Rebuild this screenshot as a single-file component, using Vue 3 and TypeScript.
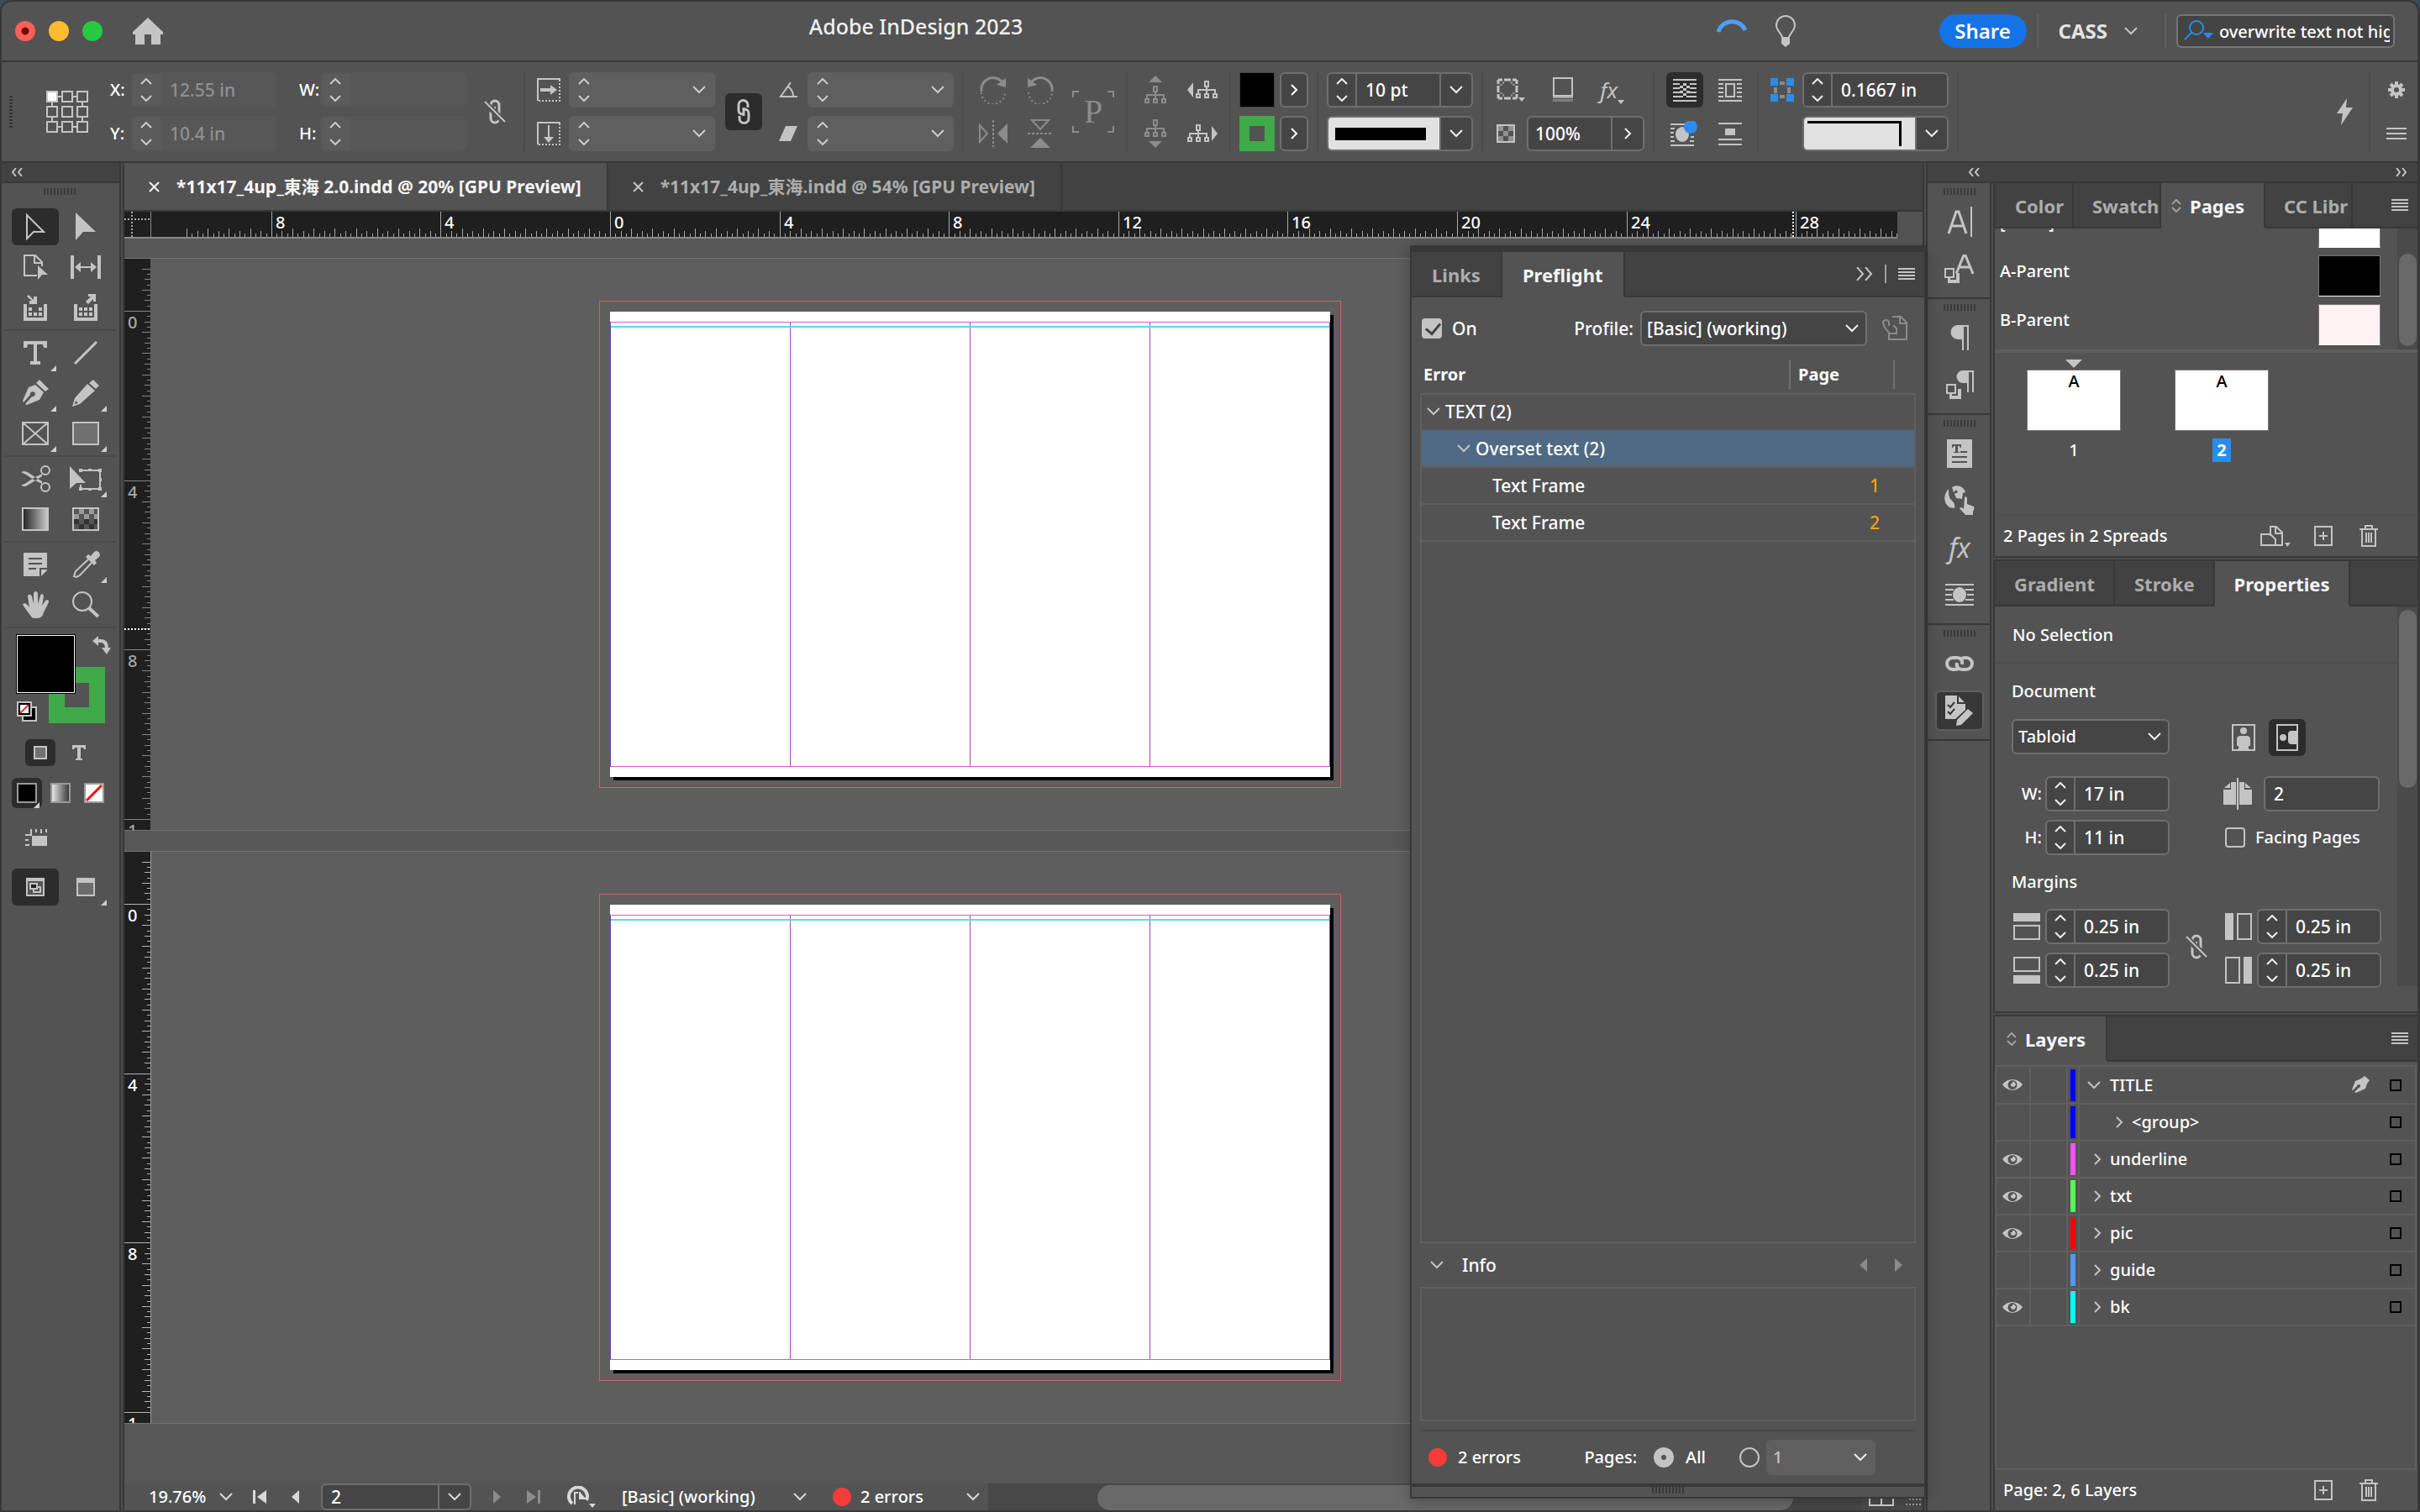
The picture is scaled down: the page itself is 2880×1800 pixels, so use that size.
<script setup lang="ts">
import { h, ref } from 'vue'

interface Glyph { w: number; h: number; d: string }

const S = 'fill="none" stroke="currentColor"'

const glyphs: Record<string, Glyph> = {
  home: { w: 36, h: 32, d: '<path d="M18 0 36 17v3h-3v12H22V20h-8v12H3V20H0v-3z"/>' },
  bulb: { w: 26, h: 38, d: `<path d="M9 27c0-5-7-8-7-15a11 11 0 0 1 22 0c0 7-7 10-7 15z" ${S} stroke-width="2"/><path d="M8 27h10v7l-5 4-5-4z"/>` },
  arc: { w: 38, h: 18, d: `<path d="M3 16a17 17 0 0 1 32-2" ${S} stroke-width="5"/>` },
  search: { w: 36, h: 26, d: `<circle cx="15" cy="9" r="8" ${S} stroke-width="2"/><path d="M9 15 1 23" ${S} stroke-width="2"/><path d="M23 15h12l-6 7z"/>` },
  down: { w: 16, h: 10, d: `<path d="m1 1 7 7 7-7" ${S} stroke-width="2"/>` },
  up: { w: 14, h: 8, d: `<path d="m1 7 6-6 6 6" ${S} stroke-width="2"/>` },
  dn: { w: 14, h: 8, d: `<path d="m1 1 6 6 6-6" ${S} stroke-width="2"/>` },
  right: { w: 9, h: 14, d: `<path d="m1 1 6 6-6 6" ${S} stroke-width="2"/>` },
  close: { w: 13, h: 13, d: `<path d="m1 1 11 11M12 1 1 12" ${S} stroke-width="2"/>` },
  ll: { w: 14, h: 10, d: `<path d="M6 0 2 5l4 5M13 0 9 5l4 5" ${S} stroke-width="2"/>` },
  rr: { w: 14, h: 10, d: `<path d="m1 0 4 5-4 5M8 0l4 5-4 5" ${S} stroke-width="2"/>` },
  rrBig: { w: 20, h: 16, d: `<path d="m1 0 7 8-7 8M11 0l7 8-7 8" ${S} stroke-width="2"/>` },
  menu: { w: 20, h: 15, d: '<path d="M0 0h20v2H0zM0 4h20v2H0zM0 8h20v2H0zM0 12h20v2H0z"/>' },
  menu3: { w: 24, h: 15, d: '<path d="M0 0h24v2H0zM0 6h24v2H0zM0 12h24v2H0z"/>' },
  updown: { w: 12, h: 16, d: `<path d="m1 6 5-5 5 5M1 10l5 5 5-5" ${S} stroke-width="2"/>` },
  grip: { w: 38, h: 8, d: '<path d="M0 0h2v8H0zM4 0h2v8H4zM8 0h2v8H8zM12 0h2v8h-2zM16 0h2v8h-2zM20 0h2v8h-2zM24 0h2v8h-2zM28 0h2v8h-2zM32 0h2v8h-2zM36 0h2v8h-2z"/>' },
  gripV: { w: 4, h: 38, d: '<path d="M0 0h4v2H0zM0 4h4v2H0zM0 8h4v2H0zM0 12h4v2H0zM0 16h4v2H0zM0 20h4v2H0zM0 24h4v2H0zM0 28h4v2H0zM0 32h4v2H0zM0 36h4v2H0z"/>' },
  refgrid: { w: 50, h: 50, d: `<path d="M7 7h36v36H7z" ${S} stroke-width="2"/><g fill="#535353" stroke="currentColor" stroke-width="2"><path fill="#fff" d="M1 1h12v12H1z"/><path d="M19 1h12v12H19zM37 1h12v12H37zM1 19h12v12H1zM19 19h12v12H19zM37 19h12v12H37zM1 37h12v12H1zM19 37h12v12H19zM37 37h12v12H37z"/></g>` },
  unlink: { w: 28, h: 30, d: `<rect x="9" y="2" width="10" height="26" rx="5" ${S} stroke-width="3"/><path d="M14 9v12" ${S} stroke-width="2"/><path d="M1 3l25 25" fill="none" stroke="#535353" stroke-width="7"/><path d="M2 3l24 24" ${S} stroke-width="2"/>` },
  chain: { w: 16, h: 30, d: `<path d="M7 18c-3 0-5-2-5-5V7a5 5 0 0 1 11 0v3M9 12c3 0 5 2 5 5v6a5 5 0 0 1-11 0v-3M8 10v10" ${S} stroke-width="3"/>` },
  scaleX: { w: 28, h: 28, d: `<path d="M28 1H1v26" ${S} stroke-width="2"/><path d="M27 2v25H2" ${S} stroke-width="2" stroke-dasharray="2 2"/><path d="M4 12h12V8l8 6-8 6v-4H4z"/>` },
  scaleY: { w: 28, h: 28, d: `<path d="M28 1H1v26" ${S} stroke-width="2"/><path d="M27 2v25H2" ${S} stroke-width="2" stroke-dasharray="2 2"/><path d="M13 4v14H8l6 7 6-7h-5V4z"/>` },
  angle: { w: 22, h: 20, d: `<path d="M14 1 2 18h20M11 6c4 3 6 7 6 12" ${S} stroke-width="2"/>` },
  skew: { w: 22, h: 18, d: '<path d="M8 0h14l-8 18H0z"/>' },
  rotR: { w: 34, h: 34, d: `<path d="M3 19a14 14 0 0 1 24-12" ${S} stroke-width="3"/><path d="M32 3v11l-11-3z"/><path d="M3 20a14 14 0 0 0 28 0" ${S} stroke-width="2" stroke-dasharray="2 3"/>` },
  rotL: { w: 34, h: 34, d: `<path d="M31 19A14 14 0 0 0 7 7" ${S} stroke-width="3"/><path d="M2 3v11l11-3z"/><path d="M3 20a14 14 0 0 0 28 0" ${S} stroke-width="2" stroke-dasharray="2 3"/>` },
  flipH: { w: 34, h: 32, d: `<path d="M1 6v20l9-10z" ${S} stroke-width="2"/><path d="M34 4v24L22 16z"/><path d="M17 0v32" ${S} stroke-width="2" stroke-dasharray="3 2"/>` },
  flipV: { w: 34, h: 34, d: `<path d="M7 1h20L17 12z" ${S} stroke-width="2"/><path d="M5 34h24L17 22z"/><path d="M2 17h30" ${S} stroke-width="2" stroke-dasharray="3 2"/>` },
  brackets: { w: 50, h: 50, d: `<path d="M8 1H1v7M42 1h7v7M8 49H1v-7M42 49h7v-7" ${S} stroke-width="2"/>` },
  treeUp: { w: 34, h: 34, d: '<path d="M9 8h16l-8-8z"/><g fill="none" stroke="currentColor" stroke-width="2"><path d="M15 13h4v6h-4zM17 19v8M7 27v-4h20v4M5 28h4v4H5zM15 28h4v4h-4zM25 28h4v4h-4z"/></g>' },
  treeDown: { w: 34, h: 34, d: '<path d="M9 26h16l-8 8z"/><g fill="none" stroke="currentColor" stroke-width="2"><path d="M15 1h4v6h-4zM17 7v8M7 15v-4h20v4M5 16h4v4H5zM15 16h4v4h-4zM25 16h4v4h-4z"/></g>' },
  treeLeft: { w: 36, h: 22, d: '<path d="M7 2v18L0 11z"/><g fill="none" stroke="currentColor" stroke-width="2"><path d="M21 1h4v6h-4zM23 7v8M13 15v-4h20v4M11 16h4v4h-4zM21 16h4v4h-4zM31 16h4v4h-4z"/></g>' },
  treeRight: { w: 36, h: 22, d: '<path d="M29 2v18l7-9z"/><g fill="none" stroke="currentColor" stroke-width="2"><path d="M11 1h4v6h-4zM13 7v8M3 15v-4h20v4M1 16h4v4H1zM11 16h4v4h-4zM21 16h4v4h-4z"/></g>' },
  corner: { w: 34, h: 28, d: `<path d="M2 2h22v22H2z" ${S} stroke-width="3" stroke-dasharray="5 2 8 2 5 0"/><path d="M8 4v3M18 4v3M8 19v3M18 19v3M4 8h3M19 8h3M4 18h3M19 18h3" ${S} stroke-width="1"/><path d="M26 23h8l-4 5z"/>` },
  shadow: { w: 26, h: 30, d: `<path d="M1 26h24v3H1z" opacity=".4"/><path d="M2 1h22v21H2z" ${S} stroke-width="2"/><path d="M1 22h24v3H1z" opacity=".7"/>` },
  tri: { w: 8, h: 5, d: '<path d="M0 0h8L4 5z"/>' },
  opacity: { w: 22, h: 22, d: `<path d="M1 1h20v20H1z" ${S} stroke-width="2"/><path opacity=".55" d="M2 2h6v6H2zM14 2h6v6h-6zM8 8h6v6H8zM2 14h6v6H2zM14 14h6v6h-6z"/>` },
  wrapNone: { w: 28, h: 27, d: '<path d="M0 0h28v2H0zM0 5h8v2H0zM20 5h8v2h-8zM0 10h8v2H0zM20 10h8v2h-8zM0 15h8v2H0zM20 15h8v2h-8zM0 20h8v2H0zM20 20h8v2h-8zM0 25h28v2H0zM12 5h4v3h-4zM8 8h4v3H8zM16 8h4v3h-4zM12 11h4v3h-4zM8 14h4v3H8zM16 14h4v3h-4zM12 17h4v3h-4zM8 20h4v2H8zM16 20h4v2h-4z"/>' },
  wrapBox: { w: 28, h: 27, d: `<path d="M0 0h28v2H0zM0 5h6v2H0zM22 5h6v2h-6zM0 10h6v2H0zM22 10h6v2h-6zM0 15h6v2H0zM22 15h6v2h-6zM0 20h6v2H0zM22 20h6v2h-6zM0 25h28v2H0z"/><path d="M9 6h10v15H9z" ${S} stroke-width="2"/>` },
  wrapShape: { w: 34, h: 30, d: '<path d="M0 3h18v2H0zM0 8h5v2H0zM0 13h4v2H0zM0 18h4v2H0zM0 23h5v2H0zM24 18h4v2h-4zM23 23h5v2h-5zM0 28h28v2H0z"/><ellipse cx="14" cy="16" rx="8" ry="9"/><circle cx="24" cy="7" r="8" fill="#2d8ceb"/>' },
  wrapJump: { w: 28, h: 27, d: '<path d="M0 0h28v2H0zM8 7h12v8H8zM0 19h28v2H0zM0 25h28v2H0z"/>' },
  cornerOpt: { w: 28, h: 28, d: '<path fill="#2d8ceb" d="M0 0h9v9H0zM19 0h9v9h-9zM0 19h9v9H0zM19 19h9v9h-9z"/><path opacity=".5" d="M11 4h6v4h-6zM11 20h6v4h-6zM4 11h4v7H4zM20 11h4v7h-4z"/>' },
  bolt: { w: 20, h: 32, d: '<path d="M13 0 1 18h7L6 32 20 11h-8z"/>' },
  gear: { w: 20, h: 20, d: `<circle cx="10" cy="10" r="5" ${S} stroke-width="4"/><path d="M10 0v4M10 16v4M0 10h4M16 10h4M3 3l3 3M14 14l3 3M3 17l3-3M14 6l3-3" ${S} stroke-width="4"/>` },
  sel: { w: 24, h: 34, d: `<path d="M2 3v28l8-8h12z" ${S} stroke-width="2"/>` },
  dsel: { w: 24, h: 34, d: '<path d="M0 0v33l9-10h15z"/>' },
  pageTool: { w: 30, h: 32, d: `<path d="M17 26H2V2h13l8 8v5M14 2v9h9" ${S} stroke-width="2"/><path d="M18 14v17l5-6h7z"/>` },
  gap: { w: 36, h: 28, d: '<path d="M0 0h4v28H0zM32 0h4v28h-4zM5 14l7-6v5h12V8l7 6-7 6v-5H12v5z"/>' },
  collect: { w: 28, h: 32, d: '<path d="M0 12h4v16h20V12h4v20H0zM6 1l6 6V3h4v9H7V8h3L4 3zM6 16h4v4H6zM18 16h4v4h-4zM6 22h4v4H6zM12 22h4v4h-4zM18 22h4v4h-4z"/>' },
  placer: { w: 28, h: 32, d: '<path d="M0 12h4v16h20V12h4v20H0zM14 9l6-6h-3V0h9v9h-3V6l-6 6zM6 16h4v4H6zM12 16h4v4h-4zM18 16h4v4h-4zM6 22h4v4H6zM12 22h4v4h-4zM18 22h4v4h-4z"/>' },
  type: { w: 28, h: 28, d: '<path d="M0 0h28v8h-4l-1-4h-7v20h4v4H8v-4h4V4H5L4 8H0z"/>' },
  line: { w: 30, h: 30, d: `<path d="M2 28 28 2" ${S} stroke-width="3"/>` },
  pen: { w: 32, h: 32, d: '<path d="M21 0l11 11-4 3L17 4zM16 6l10 9-5 9-15 6-2-1 8-9a3 3 0 1 0-2-2l-8 9-1-2L8 9z"/>' },
  pencil: { w: 32, h: 32, d: '<path d="M25 0l7 7-4 4-8-7zM18 5l9 8L9 29l-9 3 3-10zM4 25l-1 4 4-1z" fill-rule="evenodd"/>' },
  frame: { w: 32, h: 28, d: `<path d="M1 1h30v26H1zM1 1l30 26M31 1 1 27" ${S} stroke-width="2"/>` },
  rect: { w: 32, h: 28, d: '<path d="M1 1h30v26H1z" fill="#707070" stroke="currentColor" stroke-width="2"/>' },
  scissors: { w: 35, h: 32, d: `<circle cx="29" cy="6" r="5" ${S} stroke-width="2"/><circle cx="29" cy="26" r="5" ${S} stroke-width="2"/><path d="M0 8c4-2 6-1 9 1l16 10v3L15 17 6 11zM0 24c4 2 6 1 9-1l16-10v-3L15 15l-9 6z"/>` },
  transform: { w: 38, h: 30, d: `<path d="M13 22v5h23V5H13" ${S} stroke-width="2"/><path d="M11 3h4v4h-4zM22 3h4v3h-4zM34 3h4v4h-4zM35 14h3v4h-3zM34 25h4v4h-4zM22 26h4v3h-4zM11 25h4v4h-4zM0 0v27l8-7h11z"/>` },
  gradient: { w: 32, h: 28, d: '<defs><linearGradient id="ga"><stop stop-color="#222"/><stop offset="1" stop-color="#ccc"/></linearGradient></defs><path d="M1 1h30v26H1z" fill="url(#ga)" stroke="currentColor" stroke-width="2"/>' },
  feather: { w: 32, h: 28, d: '<path d="M1 1h30v26H1z" fill="#555" stroke="currentColor" stroke-width="2"/><path fill="#999" d="M8 2h6v6H8zM20 2h6v6h-6zM2 8h6v6H2zM14 8h6v6h-6zM26 8h4v6h-4z"/><path fill="#333" d="M2 14h6v6H2zM14 14h6v6h-6zM26 14h4v6h-4zM8 20h6v6H8zM20 20h6v6h-6z"/>' },
  note: { w: 28, h: 28, d: '<path fill-rule="evenodd" d="M0 0h28v18h-9v10H0zM28 20v1l-7 7v-8zM6 6v2h16V6zM6 12v2h16v-2zM6 18v2h9v-2z"/>' },
  dropper: { w: 33, h: 33, d: `<path d="M19 10 4 24l-2 6 3 1 4-2 14-15" ${S} stroke-width="2"/><path d="M16 7l3-3 3 2 4-5c4-3 9 2 6 6l-5 4 2 3-3 3z"/>` },
  hand: { w: 31, h: 32, d: '<path d="M10 30C7 25 3 21 0 16c1-3 5-2 8 3L6 6c0-3 4-3 5 0l2 9V3c0-4 5-4 5 0v12l3-10c1-3 4-2 4 1l-2 11 4-6c2-2 5 0 4 2l-6 12c-1 4-3 7-8 7-3 0-6 0-7-2z"/>' },
  zoom: { w: 32, h: 32, d: `<circle cx="12" cy="12" r="11" ${S} stroke-width="2"/><path d="m20 20 11 10" ${S} stroke-width="4"/>` },
  swap: { w: 22, h: 22, d: `<path d="M5 6h5c5 0 7 3 7 9v2" ${S} stroke-width="4"/><path d="M7 0v12L0 6zM11 14h11l-5 8z"/>` },
  defaults: { w: 24, h: 24, d: '<path d="M6 6h18v18H6z"/><path fill="#000" d="M8 8h14v14H8z"/><path d="M12 12h6v6h-6z"/><path fill="#000" d="M13 13h4v4h-4z"/><path d="M0 0h18v18H0z"/><path fill="#000" d="M2 2h14v14H2z"/><path fill="#fff" d="M4 4h10v10H4z"/><path d="M4 14 14 4" stroke="#e33" stroke-width="2"/>' },
  container: { w: 16, h: 16, d: '<path d="M1 1h14v14H1z" fill="#707070" stroke="currentColor" stroke-width="2"/>' },
  typeS: { w: 16, h: 18, d: '<path d="M0 0h16v5h-2l-1-2h-3v13h2v2H4v-2h2V3H3L2 5H0z"/>' },
  swBlack: { w: 24, h: 24, d: '<path fill="#000" stroke="#9a9a9a" stroke-width="2" d="M1 1h22v22H1z"/>' },
  swGrad: { w: 24, h: 24, d: '<defs><linearGradient id="gb"><stop stop-color="#eee"/><stop offset="1" stop-color="#333"/></linearGradient></defs><path fill="url(#gb)" stroke="#9a9a9a" stroke-width="2" d="M1 1h22v22H1z"/>' },
  swNone: { w: 24, h: 24, d: '<path fill="#fff" stroke="#9a9a9a" stroke-width="2" d="M1 1h22v22H1z"/><path d="M3 21 21 3" stroke="#f00" stroke-width="3"/>' },
  rulers: { w: 26, h: 20, d: '<path d="M8 8h18v12H8zM6 0h2v8H0V6h6zM12 0h2v4h-2zM18 0h2v5h-2zM24 0h2v4h-2zM0 12h4v2H0zM0 18h5v2H0z"/>' },
  viewNormal: { w: 22, h: 22, d: '<path d="M0 0h22v22H0z"/><path fill="#555" d="M2 4h18v16H2z"/><path d="M8 10h10v8H8z"/><path fill="#555" d="M10 12h6v4h-6z"/><path d="M4 6h10v8H4z"/><path fill="#222" d="M6 8h6v4H6z"/>' },
  viewPreview: { w: 22, h: 22, d: '<path d="M0 0h22v22H0z"/><path fill="#6c6c6c" d="M2 6h18v14H2z"/>' },
  charPanel: { w: 30, h: 36, d: `<path d="M2 32 11 6h3l9 26M5 23h15" ${S} stroke-width="3"/><path d="M28 0h2v36h-2z"/>` },
  charStyle: { w: 36, h: 34, d: `<path d="m14 23 9-22h2l9 22M18 15h13" ${S} stroke-width="3"/><path d="M4 22h14v12H4z"/><path d="M1 17h10v10H1z" fill="#535353" stroke="currentColor" stroke-width="2"/><path d="M13 22v7H7" fill="none" stroke="#535353" stroke-width="2"/>` },
  para: { w: 22, h: 30, d: '<path d="M9 0h13v30h-2V2h-4v28h-2V17H9A8 8 0 0 1 9 0z"/>' },
  paraStyle: { w: 33, h: 34, d: '<path d="M20 0h13v26h-2V2h-4v24h-2V15h-5a7 7 0 0 1 0-15zM4 22h14v12H4z"/><path d="M1 17h10v10H1z" fill="#535353" stroke="currentColor" stroke-width="2"/><path d="M13 22v7H7" fill="none" stroke="#535353" stroke-width="2"/>' },
  article: { w: 30, h: 34, d: '<path d="M0 0h30v34H0z"/><path fill="#535353" d="M6 6h11v4h-1l-1-2h-2v7h2v1H8v-1h2V8H8l-1 2H6zM16 14h8v2h-8zM6 20h18v2H6zM6 26h18v2H6z"/>' },
  globe: { w: 36, h: 36, d: '<path d="M5 4c-7 8-6 17 1 22l6 1c1-5-1-7-4-10S5 9 5 4zM9 2c6-4 14-1 16 6l-3 1-1 7-7-1-2-5 4-2-2-3-3 3zM24 14c2-2 3 0 3 2v6l8 3c1 2 0 4-1 6v4h-9c-2-3-5-5-7-8 1-2 3-1 5 1z"/>' },
  wrapPanel: { w: 34, h: 26, d: '<path d="M0 0h34v2H0zM0 6h10v2H0zM24 6h10v2H24zM0 12h8v2H0zM26 12h8v2h-8zM0 18h10v2H0zM24 18h10v2H24zM0 24h34v2H0z"/><ellipse cx="17" cy="13" rx="8" ry="9"/>' },
  links: { w: 38, h: 18, d: `<path d="M19 14c-2 2-4 2-8 2a7 7 0 0 1 0-14h5c4 0 7 3 6 8M19 4c2-2 4-2 8-2a7 7 0 0 1 0 14h-5c-4 0-7-3-6-8" ${S} stroke-width="4"/>` },
  preflight: { w: 34, h: 36, d: '<path d="M0 0h14v10h10v7L12 28H0zM16 1l7 7h-7z"/><path d="m3 11 3 3 5-6M3 19l3 3 5-6" fill="none" stroke="#383838" stroke-width="2"/><path d="m27 16 6 5-14 14-6 1 1-7z"/>' },
  portrait: { w: 28, h: 32, d: `<path d="M1 1h26v30H1z" ${S} stroke-width="2"/><circle cx="14" cy="8" r="4"/><path d="M6 18c0-3 2-4 4-4h8c2 0 4 1 4 4v8h-2v5H8v-5H6z"/>` },
  landscape: { w: 26, h: 32, d: `<path d="M1 1h24v30H1z" ${S} stroke-width="2"/><circle cx="8" cy="16" r="4"/><path d="M25 8h-7c-3 0-4 2-4 4v8c0 2 1 4 4 4h7z"/>` },
  spread: { w: 34, h: 38, d: '<path d="M16 0h2v38h-2zM0 14h9V5h6v27H0zM34 14h-9V5h-6v27h15zM1 12l7-6v6zM33 12l-7-6v6z"/>' },
  mTop: { w: 32, h: 32, d: `<path d="M0 0h32v10H0z"/><path d="M1 15h30v16H1z" ${S} stroke-width="2"/>` },
  mBottom: { w: 32, h: 32, d: `<path d="M0 22h32v10H0z"/><path d="M1 1h30v16H1z" ${S} stroke-width="2"/>` },
  mLeft: { w: 32, h: 32, d: `<path d="M0 0h10v32H0z"/><path d="M15 1h16v30H15z" ${S} stroke-width="2"/>` },
  mRight: { w: 32, h: 32, d: `<path d="M22 0h10v32H22z"/><path d="M1 1h16v30H1z" ${S} stroke-width="2"/>` },
  eye: { w: 24, h: 13, d: '<path fill-rule="evenodd" d="M0 6C6-2 18-2 24 6c-6 9-18 9-24 0zm12-5a5 5 0 1 0 0 11 5 5 0 0 0 0-11zm0 2a3 3 0 1 1-2 2h2z"/>' },
  nib: { w: 21, h: 21, d: '<path d="M15 0l6 5-3 4-2 6-11 5-2-1 5-5a2 2 0 1 0-2-2l-5 5-1-1 4-10 7-3z"/>' },
  editSize: { w: 36, h: 25, d: `<path d="M12 12V1h7l7 7v15H15M18 1v8h8M1 10h11l6 6v7H1z" ${S} stroke-width="2"/><path d="M29 20h7l-4 5z"/>` },
  add: { w: 22, h: 24, d: `<path d="M1 1h20v22H1zM11 7v10M6 12h10" ${S} stroke-width="2"/>` },
  trash: { w: 22, h: 26, d: `<path d="M0 5h22M7 5V1h8v4M3 6v19h16V6M8 9v12M11 9v12M14 9v12" ${S} stroke-width="2"/>` },
  embed: { w: 30, h: 30, d: `<path d="M12 1h10l7 7v20H8v-8M21 1v8h8M8 12v-5a4 4 0 0 0-7 0c0 7 5 10 8 14h8v-6l-4-4" ${S} stroke-width="2"/>` },
  triL: { w: 9, h: 16, d: '<path d="M9 0v16L0 8z"/>' },
  triR: { w: 9, h: 16, d: '<path d="M0 0v16l9-8z"/>' },
  first: { w: 16, h: 16, d: '<path d="M0 0h3v16H0zM16 0v16L5 8z"/>' },
  last: { w: 16, h: 16, d: '<path d="M13 0h3v16h-3zM0 0v16l11-8z"/>' },
  statusDoc: { w: 34, h: 26, d: `<path d="M6 21A11 11 0 1 1 23 17" ${S} stroke-width="4"/><path d="M8 7h6v7h8v9H8z" fill="#535353"/><path d="M9 22V8h4M15 7v8h7" ${S} stroke-width="2"/><path d="M15 7l7 8h-7z"/><path d="M26 21h8l-4 5z"/>` },
  split: { w: 30, h: 22, d: `<path d="M1 0v20h28V0M15 0v20" ${S} stroke-width="2"/>` },
  resize: { w: 20, h: 18, d: '<path opacity=".6" d="M18 2h2v2h-2zM14 2h2v2h-2zM10 2h2v2h-2zM6 8h2v2H6zM10 8h2v2h-2zM14 8h2v2h-2zM18 8h2v2h-2zM2 14h2v2H2zM6 14h2v2H6zM10 14h2v2h-2zM14 14h2v2h-2zM18 14h2v2h-2z"/>' },
}

const Icon = (props: { n: string }) => {
  const g = glyphs[props.n]
  return h('svg', { viewBox: `0 0 ${g.w} ${g.h}`, width: g.w, height: g.h, fill: 'currentColor', 'aria-hidden': 'true', innerHTML: g.d })
}
Icon.props = ['n']

interface Tool { n: string; label: string; more?: boolean; on?: boolean }
const toolGroups: Tool[][] = [
  [
    { n: 'sel', label: 'Selection', on: true }, { n: 'dsel', label: 'Direct Selection' },
    { n: 'pageTool', label: 'Page' }, { n: 'gap', label: 'Gap' },
    { n: 'collect', label: 'Content Collector' }, { n: 'placer', label: 'Content Placer' },
  ],
  [
    { n: 'type', label: 'Type', more: true }, { n: 'line', label: 'Line' },
    { n: 'pen', label: 'Pen', more: true }, { n: 'pencil', label: 'Pencil', more: true },
    { n: 'frame', label: 'Rectangle Frame', more: true }, { n: 'rect', label: 'Rectangle', more: true },
  ],
  [
    { n: 'scissors', label: 'Scissors' }, { n: 'transform', label: 'Free Transform', more: true },
    { n: 'gradient', label: 'Gradient Swatch' }, { n: 'feather', label: 'Gradient Feather' },
  ],
  [
    { n: 'note', label: 'Note' }, { n: 'dropper', label: 'Eyedropper', more: true },
    { n: 'hand', label: 'Hand' }, { n: 'zoom', label: 'Zoom' },
  ],
]

const dockGroups: Tool[][] = [
  [{ n: 'charPanel', label: 'Character' }, { n: 'charStyle', label: 'Character Styles' }],
  [{ n: 'para', label: 'Paragraph' }, { n: 'paraStyle', label: 'Paragraph Styles' }],
  [{ n: 'article', label: 'Articles' }, { n: 'globe', label: 'Hyperlinks' }, { n: 'fx', label: 'Effects' }, { n: 'wrapPanel', label: 'Text Wrap' }],
  [{ n: 'links', label: 'Links' }, { n: 'preflight', label: 'Preflight', on: true }],
]

// Rulers: 252 px cover five inches at the current zoom.
const px = (inch: number) => Math.round(inch * 252 / 5)
interface Tick { p: number; len: number; label: string }
const ticks = (from: number, to: number, full: number): Tick[] => {
  const out: Tick[] = []
  for (let e = from * 8; e <= to * 8; e++) {
    const major = e % 32 === 0
    out.push({
      p: px(e / 8),
      len: major ? full : e % 4 === 0 ? 10 : e % 2 === 0 ? 7 : 4,
      label: major ? String(Math.abs(e / 8)) : '',
    })
  }
  return out
}
const hTicks = ticks(-10, 31, 30).map(t => ({ ...t, p: t.p + 547 }))
const vTicks = ticks(-1, 12, 31).map(t => ({ ...t, p: t.p + 62 }))
const spreads = [{ id: 1, active: false }, { id: 2, active: true }]

const position = ref([{ k: 'X:', v: '12.55 in' }, { k: 'Y:', v: '10.4 in' }])
const size = ref([{ k: 'W:', v: '' }, { k: 'H:', v: '' }])
const scale = [{ n: 'scaleX', label: 'Scale X' }, { n: 'scaleY', label: 'Scale Y' }]
const turn = [{ n: 'angle', label: 'Rotation' }, { n: 'skew', label: 'Shear' }]
const docSize = ref([{ k: 'W:', v: '17 in' }, { k: 'H:', v: '11 in' }])
const margins = ref([
  { n: 'mTop', label: 'Top margin', v: '0.25 in' }, { n: 'mLeft', label: 'Left margin', v: '0.25 in' },
  { n: 'mBottom', label: 'Bottom margin', v: '0.25 in' }, { n: 'mRight', label: 'Right margin', v: '0.25 in' },
])

const layers = [
  { name: 'TITLE', color: '#0000ff', eye: true, kind: 'open' },
  { name: '<group>', color: '#0000ff', eye: false, kind: 'child' },
  { name: 'underline', color: '#ff4fff', eye: true, kind: '' },
  { name: 'txt', color: '#4fff4f', eye: true, kind: '' },
  { name: 'pic', color: '#ff0000', eye: true, kind: '' },
  { name: 'guide', color: '#4f99ff', eye: false, kind: '' },
  { name: 'bk', color: '#00ffff', eye: true, kind: '' },
]
const parents = [
  { name: '[None]', color: '#ffffff' },
  { name: 'A-Parent', color: '#000000' },
  { name: 'B-Parent', color: '#fff2f5' },
]
const preflightOn = ref(true)
const facing = ref(false)
const range = ref('all')
const query = ref('overwrite text not highlighted')
</script>

<template>
  <div class="app">
    <header class="titlebar">
      <div class="lights"><i class="red"></i><i class="yellow"></i><i class="green"></i></div>
      <button class="home" aria-label="Home"><Icon n="home" /></button>
      <h1>Adobe InDesign 2023</h1>
      <div class="title-right">
        <Icon n="arc" class="arc" />
        <button class="bulb" aria-label="Learn"><Icon n="bulb" /></button>
        <button class="share">Share</button>
        <i class="vline"></i>
        <button class="user">CASS <Icon n="down" /></button>
        <i class="vline"></i>
        <label class="search"><Icon n="search" /><input v-model="query" type="text" aria-label="Search help"></label>
      </div>
    </header>

    <div class="controls">
      <Icon n="gripV" class="gripv" />
      <button class="refpoint" aria-label="Reference point"><Icon n="refgrid" /></button>
      <div class="stack pos">
        <div v-for="f in position" :key="f.k" class="field-row">
          <label :for="'p' + f.k">{{ f.k }}</label>
          <div class="num off"><span class="steps"><Icon n="up" /><Icon n="dn" /></span><input :id="'p' + f.k" v-model="f.v" type="text"></div>
        </div>
      </div>
      <div class="stack pos">
        <div v-for="f in size" :key="f.k" class="field-row">
          <label :for="'s' + f.k">{{ f.k }}</label>
          <div class="num off"><span class="steps"><Icon n="up" /><Icon n="dn" /></span><input :id="'s' + f.k" v-model="f.v" type="text"></div>
        </div>
      </div>
      <button class="plain unl" aria-label="Constrain size"><Icon n="unlink" /></button>
      <i class="sep"></i>
      <div class="stack s14">
        <div v-for="f in scale" :key="f.n" class="field-row">
          <span class="lead28"><Icon :n="f.n" /></span>
          <div class="num combo"><span class="steps"><Icon n="up" /><Icon n="dn" /></span><input type="text" :aria-label="f.label"><button :aria-label="f.label + ' values'"><Icon n="down" /></button></div>
        </div>
      </div>
      <button class="pressed chain" aria-label="Constrain scale"><Icon n="chain" /></button>
      <div class="stack s20">
        <div v-for="f in turn" :key="f.n" class="field-row">
          <span class="lead22"><Icon :n="f.n" /></span>
          <div class="num combo"><span class="steps"><Icon n="up" /><Icon n="dn" /></span><input type="text" :aria-label="f.label"><button :aria-label="f.label + ' values'"><Icon n="down" /></button></div>
        </div>
      </div>
      <i class="sep e10"></i>
      <div class="quad dim">
        <button aria-label="Rotate 90 clockwise"><Icon n="rotR" /></button><button aria-label="Rotate 90 counter-clockwise"><Icon n="rotL" /></button>
        <button aria-label="Flip horizontal"><Icon n="flipH" /></button><button aria-label="Flip vertical"><Icon n="flipV" /></button>
      </div>
      <div class="pmark dim"><Icon n="brackets" /><b>P</b></div>
      <i class="sep e14"></i>
      <div class="quad trees">
        <button class="dim" aria-label="Select container"><Icon n="treeUp" /></button><button aria-label="Previous object"><Icon n="treeLeft" /></button>
        <button class="dim" aria-label="Select content"><Icon n="treeDown" /></button><button aria-label="Next object"><Icon n="treeRight" /></button>
      </div>
      <i class="sep e10"></i>
      <div class="stack s10">
        <div class="field-row g6"><span class="sw fill"></span><button class="box arrow" aria-label="Fill"><Icon n="right" /></button></div>
        <div class="field-row g6"><span class="sw stroke"></span><button class="box arrow" aria-label="Stroke"><Icon n="right" /></button></div>
      </div>
      <i class="sep e10"></i>
      <div class="stack s10">
        <div class="num"><span class="steps"><Icon n="up" /><Icon n="dn" /></span><input type="text" value="10 pt" aria-label="Stroke weight"><button class="drop" aria-label="Weights"><Icon n="down" /></button></div>
        <div class="num"><span class="preview"><i class="solid"></i></span><button class="drop" aria-label="Stroke type"><Icon n="down" /></button></div>
      </div>
      <i class="sep e10"></i>
      <div class="stack fxs">
        <div class="field-row fx-row">
          <button class="plain" aria-label="Corner shape"><Icon n="corner" /></button>
          <button class="plain" aria-label="Drop shadow"><Icon n="shadow" /></button>
          <button class="plain fx" aria-label="Effects">fx<Icon n="tri" /></button>
        </div>
        <div class="field-row">
          <span class="lead36"><Icon n="opacity" /></span>
          <div class="num pct"><input type="text" value="100%" aria-label="Opacity"><button class="drop" aria-label="Opacity slider"><Icon n="right" /></button></div>
        </div>
      </div>
      <i class="sep e10"></i>
      <div class="quad wraps">
        <button class="pressed" aria-label="No text wrap"><Icon n="wrapNone" /></button><button aria-label="Wrap bounding box"><Icon n="wrapBox" /></button>
        <button aria-label="Wrap object shape"><Icon n="wrapShape" /></button><button aria-label="Jump object"><Icon n="wrapJump" /></button>
      </div>
      <i class="sep e10"></i>
      <div class="stack s14">
        <div class="field-row">
          <span class="lead28"><Icon n="cornerOpt" /></span>
          <div class="num"><span class="steps"><Icon n="up" /><Icon n="dn" /></span><input type="text" value="0.1667 in" aria-label="Corner size"></div>
        </div>
        <div class="field-row">
          <span class="lead28"></span>
          <div class="num"><span class="preview"><i class="cornerline"></i></span><button class="drop" aria-label="Corner type"><Icon n="down" /></button></div>
        </div>
      </div>
      <i class="sep e10"></i>
      <div class="controls-end">
        <button class="plain" aria-label="Quick apply"><Icon n="bolt" /></button>
        <i class="sep"></i>
        <div class="stack end-stack">
          <button class="plain" aria-label="Customize"><Icon n="gear" /></button>
          <button class="plain" aria-label="Menu"><Icon n="menu3" /></button>
        </div>
      </div>
    </div>

    <div class="workspace">
      <aside class="toolbox">
        <div class="tool-head"><Icon n="ll" /></div>
        <div class="tool-grip"><Icon n="grip" /></div>
        <div v-for="(g, i) in toolGroups" :key="i" class="tool-group">
          <button v-for="t in g" :key="t.n" :class="{ pressed: t.on }" :aria-label="t.label"><Icon :n="t.n" /><i v-if="t.more" class="more"></i></button>
        </div>
        <div class="colors">
          <span class="c-stroke"></span><span class="c-fill"></span>
          <button class="c-swap" aria-label="Swap fill and stroke"><Icon n="swap" /></button>
          <button class="c-def" aria-label="Default fill and stroke"><Icon n="defaults" /></button>
        </div>
        <div class="target">
          <button class="pressed" aria-label="Format container"><Icon n="container" /></button>
          <button aria-label="Format text"><Icon n="typeS" /></button>
        </div>
        <div class="applies">
          <button class="pressed" aria-label="Apply color"><Icon n="swBlack" /><i class="more"></i></button>
          <button aria-label="Apply gradient"><Icon n="swGrad" /></button>
          <button aria-label="Apply none"><Icon n="swNone" /></button>
        </div>
        <button class="ruler-btn" aria-label="View options"><Icon n="rulers" /></button>
        <div class="tool-group views">
          <button class="pressed" aria-label="Normal view"><Icon n="viewNormal" /></button>
          <button aria-label="Preview"><Icon n="viewPreview" /><i class="more"></i></button>
        </div>
      </aside>
      <i class="gutter"></i>

      <main class="doc">
        <nav class="doc-tabs">
          <div class="doc-tab on"><button aria-label="Close"><Icon n="close" /></button><span>*11x17_4up_東海 2.0.indd @ 20% [GPU Preview]</span></div>
          <div class="doc-tab"><button aria-label="Close"><Icon n="close" /></button><span>*11x17_4up_東海.indd @ 54% [GPU Preview]</span></div>
        </nav>
        <div class="hruler">
          <svg class="origin" width="31" height="30"><path d="M9 0v30M0 9h31" stroke="#aaa" stroke-width="2" stroke-dasharray="2 2" /></svg>
          <div class="hscale">
            <svg width="100%" height="30">
              <g v-for="t in hTicks" :key="t.p">
                <rect :x="t.p - 1" :y="30 - t.len" width="1" :height="t.len" fill="#a8a8a8" />
                <text v-if="t.label" :x="t.p + 4" y="20">{{ t.label }}</text>
              </g>
              <path d="M1954 0v30" stroke="#fff" stroke-width="2" stroke-dasharray="2 2" />
            </svg>
          </div>
        </div>
        <div class="board">
          <section v-for="s in spreads" :key="s.id" class="spread" :class="{ active: s.active }">
            <svg class="vruler" width="31" height="100%">
              <g v-for="t in vTicks" :key="t.p">
                <rect :x="31 - t.len" :y="t.p" :width="t.len" height="1" />
                <text v-if="t.label" x="4" :y="t.p + 21">{{ t.label[0] }}</text>
              </g>
              <path v-if="!s.active" d="M0 441h31" stroke="#fff" stroke-width="2" stroke-dasharray="2 2" />
            </svg>
            <div class="canvas">
              <div class="bleed"></div>
              <div class="page"><div class="frame"><i></i><i></i><i></i><i></i></div></div>
            </div>
          </section>
        </div>
        <footer class="status">
          <button class="zoomval">19.76% <Icon n="down" /></button>
          <button class="nav" aria-label="First page"><Icon n="first" /></button>
          <button class="nav" aria-label="Previous page"><Icon n="triL" /></button>
          <div class="num pageno"><input type="text" value="2" aria-label="Page"><button class="drop" aria-label="Page list"><Icon n="down" /></button></div>
          <button class="nav dim" aria-label="Next page"><Icon n="triR" /></button>
          <button class="nav dim" aria-label="Last page"><Icon n="last" /></button>
          <button class="nav sdoc" aria-label="Open status"><Icon n="statusDoc" /></button>
          <button class="profile">[Basic] (working) <Icon n="down" /></button>
          <i class="dot"></i>
          <button class="errs">2 errors <Icon n="down" /></button>
          <div class="hscroll"><i></i></div>
          <div class="corner-tools"><Icon n="split" /><Icon n="resize" /></div>
        </footer>

        <section class="preflight">
          <div class="tabs">
            <button class="tab">Links</button><button class="tab on">Preflight</button>
            <span class="tab-end"><Icon n="rrBig" /><i></i><Icon n="menu" /></span>
          </div>
          <div class="pf-body">
            <div class="pf-top">
              <label class="check"><input v-model="preflightOn" type="checkbox">On</label>
              <label for="profile" class="pf-profile">Profile:</label>
              <span class="select"><select id="profile"><option>[Basic] (working)</option></select><Icon n="down" /></span>
              <button class="plain dim" aria-label="Embed profile"><Icon n="embed" /></button>
            </div>
            <div class="pf-list">
              <table>
                <thead><tr><th>Error</th><th class="c-page">Page</th></tr></thead>
                <tbody>
                  <tr><td><span class="lv0"><Icon n="down" />TEXT (2)</span></td><td></td></tr>
                  <tr class="hit"><td><span class="lv1"><Icon n="down" />Overset text (2)</span></td><td></td></tr>
                  <tr><td><span class="lv2">Text Frame</span></td><td class="pg">1</td></tr>
                  <tr><td><span class="lv2">Text Frame</span></td><td class="pg">2</td></tr>
                </tbody>
              </table>
            </div>
            <div class="pf-info"><Icon n="down" /><span>Info</span><button class="dim" aria-label="Previous error"><Icon n="triL" /></button><button class="dim" aria-label="Next error"><Icon n="triR" /></button></div>
            <div class="pf-box"></div>
            <div class="pf-foot">
              <i class="dot"></i><span class="count">2 errors</span>
              <span class="lab">Pages:</span>
              <label class="radio"><input v-model="range" type="radio" value="all">All</label>
              <input v-model="range" type="radio" value="range" aria-label="Page range">
              <span class="select flat"><select aria-label="Range"><option>1</option></select><Icon n="down" /></span>
            </div>
          </div>
          <div class="pf-grip"><Icon n="grip" /></div>
        </section>
      </main>
      <i class="gutter"></i>

      <div class="dock">
        <div class="dock-head"><Icon n="ll" /><Icon n="rr" /></div>
        <div class="dock-body">
          <aside class="strip">
            <div v-for="(g, i) in dockGroups" :key="i" class="strip-group">
              <Icon n="grip" class="sgrip" />
              <button v-for="b in g" :key="b.label" :class="{ on: b.on }" :aria-label="b.label">
                <span v-if="b.n === 'fx'" class="fxbig">fx</span><Icon v-else :n="b.n" />
              </button>
            </div>
          </aside>
          <i class="gutter"></i>
          <div class="panels">
            <section class="panel pages">
              <div class="tabs narrow">
                <button class="tab">Color</button><button class="tab">Swatch</button>
                <button class="tab on"><Icon n="updown" />Pages</button><button class="tab">CC Libr</button>
                <span class="tab-end"><Icon n="menu" /></span>
              </div>
              <div class="parents">
                <div class="parent-list">
                  <div v-for="p in parents" :key="p.name" class="parent"><span>{{ p.name }}</span><i :style="{ background: p.color }"></i></div>
                </div>
                <div class="vscroll"><i></i></div>
              </div>
              <div class="thumbs">
                <div class="thumb"><i class="mark"></i><span class="sheet">A</span><span class="no">1</span></div>
                <div class="thumb"><span class="sheet">A</span><span class="no on">2</span></div>
              </div>
              <div class="panel-foot">
                <span>2 Pages in 2 Spreads</span>
                <button aria-label="Edit page size" class="edit"><Icon n="editSize" /></button>
                <button aria-label="New page"><Icon n="add" /></button>
                <button aria-label="Delete page"><Icon n="trash" /></button>
              </div>
            </section>
            <i class="hgutter"></i>
            <section class="panel props">
              <div class="tabs">
                <button class="tab">Gradient</button><button class="tab">Stroke</button><button class="tab on">Properties</button>
                <span class="tab-end"></span>
              </div>
              <div class="props-wrap">
                <div class="props-body">
                  <p class="nosel">No Selection</p>
                  <h2>Document</h2>
                  <div class="prow">
                    <span class="select half"><select aria-label="Page size"><option>Tabloid</option></select><Icon n="down" /></span>
                    <div class="half orient">
                      <button aria-label="Portrait"><Icon n="portrait" /></button>
                      <button class="pressed" aria-label="Landscape"><Icon n="landscape" /></button>
                    </div>
                  </div>
                  <div class="prow duo">
                    <div class="half col">
                      <div v-for="f in docSize" :key="f.k" class="hrow">
                        <label :for="'d' + f.k">{{ f.k }}</label>
                        <div class="num"><span class="steps"><Icon n="up" /><Icon n="dn" /></span><input :id="'d' + f.k" v-model="f.v" type="text"></div>
                      </div>
                    </div>
                    <div class="half col">
                      <div class="hrow wide"><Icon n="spread" /><div class="num"><input type="text" value="2" aria-label="Pages"></div></div>
                      <label class="check"><input v-model="facing" type="checkbox">Facing Pages</label>
                    </div>
                  </div>
                  <h2 class="mh">Margins</h2>
                  <div class="margins">
                    <div v-for="m in margins" :key="m.n" class="half hrow">
                      <Icon :n="m.n" />
                      <div class="num"><span class="steps"><Icon n="up" /><Icon n="dn" /></span><input v-model="m.v" type="text" :aria-label="m.label"></div>
                    </div>
                    <button class="plain mlink" aria-label="Link margins"><Icon n="unlink" /></button>
                  </div>
                </div>
                <div class="vscroll"><i></i></div>
              </div>
            </section>
            <i class="hgutter"></i>
            <section class="panel layers">
              <div class="tabs">
                <button class="tab on"><Icon n="updown" />Layers</button>
                <span class="tab-end"><Icon n="menu" /></span>
              </div>
              <div class="layer-list">
                <table>
                  <tbody>
                    <tr v-for="l in layers" :key="l.name">
                      <td class="l-eye"><Icon v-if="l.eye" n="eye" /></td>
                      <td class="l-lock"></td>
                      <td class="l-col"><i :style="{ background: l.color }"></i></td>
                      <td><div class="l-name" :class="l.kind"><span class="chev"><Icon :n="l.kind === 'open' ? 'down' : 'right'" /></span><span>{{ l.name }}</span><Icon v-if="l.kind === 'open'" n="nib" class="nib" /><i class="sq"></i></div></td>
                    </tr>
                  </tbody>
                </table>
              </div>
              <div class="panel-foot">
                <span>Page: 2, 6 Layers</span>
                <button aria-label="New layer"><Icon n="add" /></button>
                <button aria-label="Delete layer"><Icon n="trash" /></button>
              </div>
            </section>
          </div>
        </div>
      </div>
    </div>
  </div>
</template>

<style>
body { background: #3c4b58; }
</style>

<style scoped>
* { box-sizing: border-box; }
svg { display: block; flex: none; }
i { display: block; }
button { background: none; border: 0; padding: 0; margin: 0; color: inherit; font: inherit; display: flex; align-items: center; justify-content: center; position: relative; }
input, select { font: inherit; color: inherit; margin: 0; }
h1, h2, p { margin: 0; font: inherit; }

.app {
  display: flex; flex-direction: column; height: 100vh; overflow: hidden;
  background: #535353; border: 2px solid #383838; border-right-width: 3px; border-radius: 14px 14px 0 0;
  color: #fff; font: 500 20px/28px "Noto Sans", "Noto Sans CJK TC", sans-serif;
}
.app svg { color: #c4c4c4; }
.app .dim svg { color: #8c8c8c; }
.pressed { background: #2c2c2c; border-radius: 6px; }
.dot { width: 22px; height: 22px; border-radius: 50%; background: #f63b3b; flex: none; }

/* title bar */
.titlebar { height: 72px; flex: none; border-bottom: 2px solid #383838; display: flex; align-items: center; position: relative; }
.lights { display: flex; gap: 16px; padding-left: 16px; }
.lights i { width: 24px; height: 24px; border-radius: 50%; }
.red { background: radial-gradient(circle, #6e0a05 0 4px, #ff5f57 5px); }
.yellow { background: #febc2e; }
.green { background: #28c840; }
.home { margin-left: 36px; }
h1 { position: absolute; left: 0; right: 699px; text-align: center; font-size: 25px; line-height: 36px; top: 11px; pointer-events: none; color: #f0f0f0; }
.title-right { margin-left: auto; display: flex; align-items: center; height: 70px; padding-right: 27px; }
.app .arc { color: #4ba1f3; margin-right: 32px; margin-bottom: 12px; }
.bulb { margin-right: 170px; }
.share { background: #1473e6; border-radius: 20px; width: 104px; height: 40px; font-size: 24px; font-weight: 600; }
.vline { width: 2px; height: 40px; background: #606060; margin: 0 12px; }
.user { font-size: 24px; font-weight: 700; gap: 20px; color: #e3e3e3; margin: 0 20px 0 12px; }
.search { display: flex; align-items: center; width: 260px; height: 40px; border: 2px solid #757575; border-radius: 6px; background: #444; padding: 0 4px 0 7px; gap: 6px; }
.app .search svg { color: #2d8ceb; }
.search input { flex: 1; width: 0; background: none; border: 0; outline: 0; padding: 0; height: 34px; }

/* control bar */
.controls { height: 120px; flex: none; border-bottom: 2px solid #383838; display: flex; align-items: center; }
.controls > * { flex: none; }
.app .gripv { color: #333; margin: 0 40px 0 9px; }
.refpoint { margin-right: 26px; }
.stack { display: flex; flex-direction: column; gap: 10px; }
.pos { margin-right: 26px; }
.field-row { display: flex; align-items: center; height: 42px; }
.field-row label { width: 25px; }
.field-row.g6 { gap: 6px; }
.num { display: flex; width: 174px; height: 42px; background: #454545; border: 2px solid #6f6f6f; border-radius: 6px; overflow: hidden; flex: none; }
.num input { flex: 1; width: 0; min-width: 0; background: none; border: 0; outline: 0; padding: 0 0 0 10px; font-size: 21px; }
.steps { display: flex; flex-direction: column; justify-content: center; align-items: center; gap: 12px; width: 34px; border-right: 2px solid #6f6f6f; flex: none; }
.app .num svg { color: #eee; }
.drop { width: 38px; border-left: 2px solid #6f6f6f; flex: none; }
.num.off { background: #575757; border-color: #575757; color: #909090; }
.num.off .steps, .num.combo .steps { border-color: transparent; }
.num.off .steps { background: #5b5b5b; }
.app .num.off svg, .app .num.combo svg { color: #ccc; }
.num.combo { background: #5f5f5f; border-color: #5f5f5f; }
.num.combo button { width: 34px; }
.unl { margin: 0 20px 0 -6px; }
.sep { width: 2px; height: 94px; background: #4b4b4b; }
.sep.e10 { margin-left: 10px; }
.sep.e14 { margin-left: 14px; }
.s14 { margin-left: 14px; }
.s10 { margin-left: 10px; }
.s20 { margin-left: 20px; }
.lead28 { width: 38px; }
.lead22 { width: 34px; }
.lead36 { width: 36px; }
.chain { width: 44px; height: 44px; margin-left: 12px; }
.quad { display: grid; grid-template-columns: 44px 44px; grid-auto-rows: 42px; gap: 10px 12px; margin-left: 13px; }
.quad.trees { margin-left: 11px; }
.pmark { position: relative; width: 50px; height: 50px; margin-left: 16px; display: flex; align-items: center; justify-content: center; }
.pmark svg { position: absolute; inset: 0; }
.pmark b { font: 400 40px/50px "Liberation Serif", serif; color: #8c8c8c; }
.sw { width: 42px; height: 42px; border: 1px solid #444; }
.sw.fill { background: #000; }
.sw.stroke { background: #535353; border: 12px solid #40a949; }
.box { border: 2px solid #6f6f6f; border-radius: 6px; background: #454545; }
.arrow { width: 34px; height: 42px; }
.app .arrow svg { color: #fff; }
.preview { flex: 1; background: #e1e1e1; display: flex; align-items: center; padding: 0 16px 0 8px; }
.solid { flex: 1; height: 15px; background: #000; }
.cornerline { flex: 1; height: 30px; border: solid #000; border-width: 3px 3px 0 0; margin-left: -4px; }
.fxs { margin-left: 16px; }
.fx-row { justify-content: space-between; width: 152px; }
.fx { font: italic 400 26px/34px "Noto Sans", sans-serif; color: #c4c4c4; align-items: flex-end; }
.num.pct { width: 140px; }
.num.pct input { padding-left: 8px; }
.quad.wraps { gap: 10px; margin-left: 14px; }
.controls-end { margin-left: auto; display: flex; align-items: center; gap: 19px; padding-right: 13px; }
.end-stack { width: 24px; }
.end-stack button { height: 42px; }

/* workspace */
.workspace { flex: 1; display: flex; min-height: 0; }
.gutter { width: 6px; flex: none; border: solid #383838; border-width: 0 2px; background: #4c4c4c; }
.toolbox { width: 140px; flex: none; }
.tool-head { height: 24px; background: #424242; border-bottom: 2px solid #383838; display: flex; align-items: center; padding-left: 11px; }
.tool-grip { height: 30px; padding: 6px 0 0 50px; }
.app .tool-grip svg, .app .sgrip, .app .pf-grip svg { color: #3a3a3a; }
.tool-group { display: grid; grid-template-columns: 56px 56px; grid-auto-rows: 44px; gap: 4px; margin: 0 4px; padding: 0 8px 4px; border-bottom: 2px solid #4a4a4a; }
.tool-group + .tool-group { padding-top: 4px; }
.more { position: absolute; right: 3px; bottom: 0; width: 7px; height: 7px; background: #d0d0d0; clip-path: polygon(100% 0, 100% 100%, 0 100%); }
.colors { position: relative; height: 132px; }
.c-fill { position: absolute; left: 17px; top: 7px; width: 71px; height: 71px; background: #000; border: 1px solid #000; box-shadow: inset 0 0 0 1px #fff; }
.c-stroke { position: absolute; left: 56px; top: 46px; width: 67px; height: 67px; border: 19px solid #40a949; }
.c-swap { position: absolute; left: 108px; top: 9px; }
.c-def { position: absolute; left: 18px; top: 87px; }
.target { display: flex; gap: 10px; padding-left: 28px; }
.target button { width: 36px; height: 32px; }
.applies { display: flex; gap: 4px; padding: 14px 0 0 12px; }
.applies button { width: 36px; height: 36px; }
.ruler-btn { margin: 25px 0 27px 28px; }
.views { border: 0; }

/* document */
.doc { flex: 1; min-width: 0; display: flex; flex-direction: column; position: relative; }
.doc-tabs { height: 58px; flex: none; background: #424242; border-bottom: 2px solid #383838; display: flex; }
.doc-tab { display: flex; align-items: center; gap: 20px; padding: 0 30px 0 29px; border-right: 2px solid #383838; font-size: 21px; font-weight: 700; color: #adadad; white-space: nowrap; }
.doc-tab.on { background: #535353; color: #f5f5f5; }
.app .doc-tab.on svg { color: #f5f5f5; }
.hruler { height: 32px; flex: none; display: flex; background: #1f1f1f; border-bottom: 2px solid #8a8a8a; margin-right: 30px; }
.origin { flex: none; }
.hscale { flex: 1; min-width: 0; overflow: hidden; border-left: 1px solid #8a8a8a; }
.hscale text, .vruler text { fill: #fff; font-size: 20px; }
.board { flex: 1; min-height: 0; background: #575757; padding-top: 23px; overflow: hidden; }
.spread { display: flex; height: 682px; border: solid #747474; border-width: 1px 0; background: #5e5e5e; margin-bottom: 24px; }
.vruler { background: #1f1f1f; overflow: hidden; }
.vruler rect { fill: #858585; }
.vruler text { fill: #a8a8a8; }
.active .vruler rect { fill: #b5b5b5; }
.active .vruler text { fill: #fff; }
.canvas { position: relative; flex: 1; border-left: 1px solid #5e5e5e; }
.active .canvas { border-left-color: #999; }
.bleed { position: absolute; left: 533px; top: 50px; width: 883px; height: 580px; border: 1px solid #d2606c; }
.page { position: absolute; left: 546px; top: 63px; width: 857px; height: 554px; background: #fff; box-shadow: 4px 4px #000; padding: 12px 0; }
.frame { height: 100%; border: 1px solid #7040b0; border-color: #cf5ccf #7040b0; display: flex; position: relative; }
.frame::before { content: ""; position: absolute; left: 0; right: 0; top: 4px; height: 2px; background: #4fdfe8; }
.frame i { flex: 1; border-right: 1px solid #a648b4; }
.frame i:last-child { border: 0; }

/* status bar */
.status { height: 32px; flex: none; display: flex; align-items: center; background: #535353; }
.status > * { flex: none; }
.app .status svg { color: #d8d8d8; }
.app .status .dim svg { color: #8c8c8c; }
.zoomval { width: 129px; padding: 0 0 0 29px; justify-content: space-between; }
.zoomval + .nav { margin-left: 10px; }
.nav { width: 43px; height: 32px; }
.status .num { height: 32px; width: 179px; margin: 0 9px; }
.sdoc { margin: 0 27px 0 14px; }
.profile { width: 220px; justify-content: space-between; }
.status .dot { margin: 0 11px 0 31px; }
.errs { width: 142px; justify-content: space-between; margin-right: 10px; }
.status .hscroll { flex: 1; height: 32px; background: #484848; padding: 2px 0 0 130px; }
.hscroll i { width: 828px; height: 30px; border-radius: 15px; background: #696969; }
.corner-tools { display: flex; gap: 12px; align-items: flex-end; width: 72px; height: 32px; padding: 0 0 4px 8px; background: #4c4c4c; }

/* preflight panel */
.preflight { position: absolute; right: -4px; top: 98px; bottom: 14px; width: 614px; display: flex; flex-direction: column; background: #535353; border: solid #383838; border-width: 8px 2px 2px; box-shadow: 0 4px 16px rgba(0, 0, 0, .25); z-index: 2; }
.tabs { display: flex; height: 54px; flex: none; background: #424242; }
.tab { height: 54px; padding: 2px 24px 0; border: solid #383838; border-width: 0 2px 2px 0; font-size: 22px; font-weight: 700; color: #adadad; white-space: nowrap; flex: none; }
.tab.on { background: #535353; color: #f5f5f5; border-bottom-color: #535353; }
.app .tab svg { margin-right: 10px; color: #a0a0a0; }
.tab-end { flex: 1; display: flex; align-items: center; justify-content: flex-end; gap: 14px; padding-right: 11px; border-bottom: 2px solid #383838; }
.tab-end i { width: 2px; height: 22px; background: #a0a0a0; }
.pf-body { flex: 1; display: flex; flex-direction: column; padding: 16px 10px 0; min-height: 0; }
.pf-top { display: flex; align-items: center; height: 42px; padding-left: 2px; font-size: 21px; }
.check { display: flex; align-items: center; gap: 12px; }
.check input { appearance: none; width: 24px; height: 24px; border: 2px solid #c4c4c4; border-radius: 4px; position: relative; flex: none; }
.check input:checked { background: #c4c4c4; }
.check input:checked::after { content: ""; position: absolute; left: 6px; top: 0; width: 8px; height: 14px; border: solid #444; border-width: 0 3px 3px 0; rotate: 40deg; }
.pf-profile { margin-left: auto; margin-right: 8px; }
.select { position: relative; display: block; flex: none; height: 42px; width: 270px; }
.select select { appearance: none; width: 100%; height: 100%; background: #454545; border: 2px solid #6f6f6f; border-radius: 6px; padding: 0 6px; }
.app .select svg { position: absolute; right: 10px; top: 16px; color: #eee; pointer-events: none; }
.pf-top .plain { margin: 0 10px 0 18px; }
.pf-list { flex: 1; margin-top: 12px; position: relative; }
.pf-list::after { content: ""; position: absolute; inset: 44px 0 0; border: 2px solid #5f5f5f; pointer-events: none; }
table { border-collapse: collapse; width: 100%; table-layout: fixed; }
th { text-align: left; padding: 0 0 0 4px; font-size: 20px; font-weight: 700; height: 44px; }
.c-page { width: 151px; padding-left: 11px; background: linear-gradient(#707070, #707070) 0 50% / 2px 34px no-repeat, linear-gradient(#707070, #707070) 124px 50% / 2px 34px no-repeat; }
.pf-list td { height: 44px; padding: 0 43px 0 0; border-bottom: 2px solid #5f5f5f; }
.pf-list td span { display: flex; align-items: center; gap: 6px; font-size: 21px; }
.lv0 { padding-left: 8px; }
.lv1 { padding-left: 44px; }
.lv2 { padding-left: 86px; }
.hit { background: #4f6a82; }
.pf-list .pg { color: #f5a30f; text-align: right; font-size: 21px; }
.pf-info { display: flex; align-items: center; height: 52px; padding: 0 16px 0 12px; font-size: 21px; }
.pf-info span { margin: 0 auto 0 22px; }
.pf-info button { margin-left: 33px; }
.pf-box { height: 160px; border: 2px solid #5f5f5f; margin-bottom: 10px; flex: none; }
.pf-foot { display: flex; align-items: center; height: 64px; border-top: 2px solid #4a4a4a; padding-left: 10px; flex: none; }
.count { margin-left: 13px; }
.lab { margin: 0 20px 0 auto; }
.radio { display: flex; align-items: center; gap: 14px; margin-right: 40px; }
.pf-foot input { appearance: none; width: 24px; height: 24px; border: 2px solid #c4c4c4; border-radius: 50%; flex: none; }
.pf-foot input:checked { border-width: 9px; }
.select.flat { width: 130px; margin: 0 48px 0 8px; color: #c4c4c4; }
.select.flat select { background: #5f5f5f; border-color: #5f5f5f; }
.pf-grip { height: 16px; border-top: 4px solid #383838; display: flex; justify-content: center; flex: none; }

/* dock */
.dock { display: flex; flex-direction: column; flex: none; }
.dock-head { height: 24px; flex: none; background: #424242; border-bottom: 2px solid #383838; display: flex; align-items: center; justify-content: space-between; padding: 0 12px 0 48px; }
.dock-body { flex: 1; display: flex; min-height: 0; }
.strip { width: 74px; flex: none; }
.strip-group { display: flex; flex-direction: column; align-items: center; gap: 8px; padding: 6px 0 10px 2px; border-bottom: 2px solid #383838; }
.strip-group button { width: 58px; height: 48px; border: 2px solid transparent; border-radius: 6px; }
.strip-group .on { background: #383838; border-color: #606060; }
.fxbig { font: italic 400 32px/40px "Noto Sans", sans-serif; color: #c4c4c4; }
.panels { width: 503px; display: flex; flex-direction: column; }
.panel { display: flex; flex-direction: column; min-height: 0; }
.hgutter { height: 6px; flex: none; border: solid #383838; border-width: 2px 0; background: #4c4c4c; margin-left: -2px; }
.narrow .tab { width: 104px; justify-content: flex-start; padding: 2px 0 0 22px; overflow: hidden; }
.narrow .tab:first-child { width: 94px; padding-left: 24px; }
.narrow .tab.on { width: 124px; padding-left: 12px; }
.parents { display: flex; height: 144px; overflow: hidden; }
.parent-list { flex: 1; margin-top: -26px; }
.parent { display: flex; height: 58px; padding: 0 20px 0 6px; justify-content: space-between; align-items: flex-start; line-height: 38px; }
.parent i { width: 74px; height: 49px; border: 1px solid #777; border-bottom: 1px solid #fff; }
.vscroll { width: 24px; background: #4a4a4a; padding: 0 1px 0 2px; flex: none; }
.vscroll i { border-radius: 11px; background: #696969; }
.parents .vscroll i { height: 110px; margin-top: 30px; }
.thumbs { height: 198px; border-top: 4px solid #5e5e5e; border-bottom: 1px solid #4e4e4e; display: flex; gap: 64px; padding: 20px 0 0 38px; }
.thumb { width: 112px; display: flex; flex-direction: column; align-items: center; position: relative; }
.mark { position: absolute; top: -12px; width: 20px; height: 10px; background: #c4c4c4; clip-path: polygon(0 0, 100% 0, 50% 100%); }
.sheet { width: 112px; height: 73px; background: #fff; border: 1px solid #777; color: #000; text-align: center; line-height: 26px; }
.no { margin-top: 9px; height: 28px; padding: 0 5px; }
.no.on { background: #2d8ceb; font-weight: 700; }
.panel-foot { display: flex; align-items: center; height: 48px; flex: none; padding: 0 47px 0 10px; gap: 32px; }
.panel-foot span { margin-right: auto; }
.panel-foot .edit { margin-right: -4px; }

.props .tab { padding: 2px 22px 0 23px; }
.props-wrap { display: flex; height: 482px; }
.props-body { flex: 1; padding-left: 20px; }
.nosel { height: 68px; line-height: 68px; border-bottom: 2px solid #4d4d4d; margin-left: -20px; padding-left: 21px; }
h2 { line-height: 66px; }
.prow { display: flex; gap: 64px; }
.half { width: 188px; }
.select.half { width: 188px; }
.orient { display: flex; align-items: center; gap: 16px; padding-left: 10px; }
.orient .pressed { width: 44px; height: 44px; }
.duo { margin-top: 24px; }
.col { display: flex; flex-direction: column; gap: 10px; }
.col .check { height: 42px; padding-left: 2px; }
.hrow { display: flex; align-items: center; justify-content: space-between; height: 42px; }
.hrow label { width: 36px; text-align: right; }
.hrow svg { margin-left: 2px; }
.hrow .steps svg { margin: 0; }
.hrow .num { width: 148px; }
.hrow.wide { width: 186px; }
.hrow.wide svg { margin: 0; }
.hrow.wide .num { width: 138px; }
.mh { line-height: 64px; }
.margins { display: grid; grid-template-columns: 188px 188px; gap: 10px 64px; position: relative; }
.mlink { position: absolute; left: 206px; top: 30px; }
.props .vscroll { height: 452px; }
.props .vscroll i { height: 212px; margin-top: 4px; }

.layers { flex: 1; }
.layer-list { flex: 1; margin: 4px 1px 0 0; border: 2px solid #5f5f5f; }
.layers .tab { padding: 2px 24px 0 14px; }
.layer-list td { height: 44px; padding: 0; border-bottom: 2px solid #5f5f5f; }
.l-eye { width: 40px; border-right: 2px solid #5f5f5f; }
.l-eye svg { margin-left: 7px; }
.l-lock { width: 44px; border-right: 2px solid #5f5f5f; }
.l-col { width: 14px; border-right: 2px solid #5f5f5f; }
.l-col i { width: 6px; height: 38px; margin: 0 0 0 3px; }
.l-name { display: flex; align-items: center; padding: 0 16px 0 8px; }
.chev { width: 28px; padding-left: 9px; flex: none; }
.open .chev { padding-left: 1px; }
.child { padding-left: 34px; }
.nib { margin-left: auto; }
.sq { width: 14px; height: 14px; border: 2px solid #000; margin-left: auto; }
.nib + .sq { margin-left: 24px; }
</style>
